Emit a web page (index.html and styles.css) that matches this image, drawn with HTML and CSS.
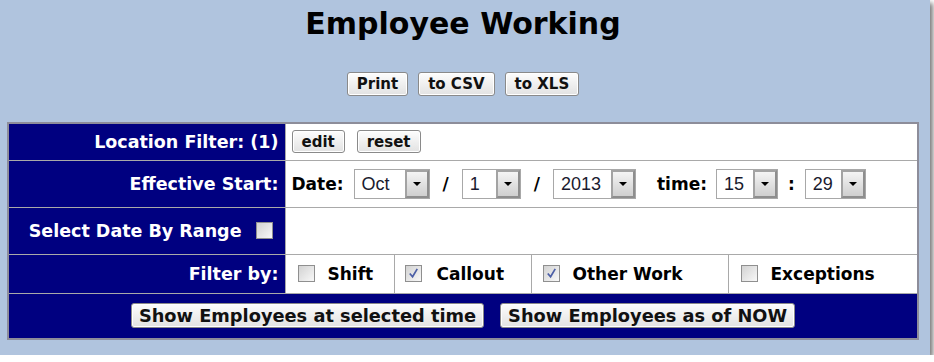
FILE: index.html
```html
<!DOCTYPE html>
<html lang="en">
<head>
    <meta charset="UTF-8">
    <title>Employee Working</title>
    <link rel="stylesheet" href="styles.css">
</head>
<body>
    <div class="page">
        <div class="content">
            <h1 class="title">Employee Working</h1>

            <div class="toolbar">
                <button class="btn">Print</button>
                <button class="btn">to CSV</button>
                <button class="btn">to XLS</button>
            </div>

            <table class="filters">
                <colgroup>
                    <col class="col-label">
                    <col class="col-shift">
                    <col class="col-callout">
                    <col class="col-other">
                    <col>
                </colgroup>
                <tr class="row-location">
                    <th>Location Filter: (1)</th>
                    <td colspan="4">
                        <button class="btn">edit</button>
                        <button class="btn">reset</button>
                    </td>
                </tr>
                <tr class="row-start">
                    <th>Effective Start:</th>
                    <td colspan="4">
                        <div class="when">
                            <span class="field-label">Date:</span>
                            <span class="select sel-month"><span class="value">Oct</span><span class="arrow"></span></span>
                            <span class="sep">/</span>
                            <span class="select sel-day"><span class="value">1</span><span class="arrow"></span></span>
                            <span class="sep">/</span>
                            <span class="select sel-year"><span class="value">2013</span><span class="arrow"></span></span>
                            <span class="field-label time-label">time:</span>
                            <span class="select sel-hour"><span class="value">15</span><span class="arrow"></span></span>
                            <span class="sep colon">:</span>
                            <span class="select sel-min"><span class="value">29</span><span class="arrow"></span></span>
                        </div>
                    </td>
                </tr>
                <tr class="row-range">
                    <th>Select Date By Range<span class="check range-check"></span></th>
                    <td colspan="4"></td>
                </tr>
                <tr class="row-filter">
                    <th>Filter by:</th>
                    <td><span class="check"></span><span class="opt">Shift</span></td>
                    <td><span class="check checked"><svg viewBox="0 0 16 16"><path d="M4 8 L7 11.5 L12 3"/></svg></span><span class="opt">Callout</span></td>
                    <td><span class="check checked"><svg viewBox="0 0 16 16"><path d="M4 8 L7 11.5 L12 3"/></svg></span><span class="opt">Other Work</span></td>
                    <td><span class="check"></span><span class="opt">Exceptions</span></td>
                </tr>
                <tr class="row-actions">
                    <td colspan="5">
                        <div class="actions">
                            <button class="btn btn-big">Show Employees at selected time</button>
                            <button class="btn btn-big">Show Employees as of NOW</button>
                        </div>
                    </td>
                </tr>
            </table>
        </div>
    </div>
</body>
</html>
```

FILE: styles.css
```css
body {
    margin: 0;
    background-color: #fff;
    font-family: "DejaVu Sans", Verdana, sans-serif;
    color: #000;
}

.page {
    width: 930px;
    height: 355px;
    box-sizing: border-box;
    padding: 0 11px 0 7px;
    background-color: #b0c4de; /* light steel blue */
    box-shadow: 3px 3px 5px #7a7a7a;
}

.title {
    margin: 0;
    padding-top: 6px;
    font-size: 30px;
    line-height: 36px;
    text-align: center;
}

.toolbar {
    display: flex;
    justify-content: center;
    gap: 10px;
    margin-top: 30px;
}

.btn {
    height: 24px;
    padding: 0 9px;
    font-family: "DejaVu Sans", Verdana, sans-serif;
    font-size: 15px;
    font-weight: bold;
    color: #111;
    background: linear-gradient(#fdfdfd, #e2e2e2);
    border: 1px solid #8a8a8a;
    border-radius: 3px;
    box-shadow: inset 0 0 0 1px #fff;
}

/* form table */
.filters {
    width: 912px;
    margin-top: 26px;
    border-collapse: collapse;
    border: 2px solid #8d8d9a;
}

.col-label { width: 277px; }
.col-shift { width: 109px; }
.col-callout { width: 137px; }
.col-other { width: 197px; }

.filters th,
.filters td {
    border: 1px solid #a9a9a9;
    padding: 0;
}

.filters th {
    background-color: #000080; /* navy */
    color: #fff;
    font-size: 17.5px;
    font-weight: bold;
    text-align: right;
    padding-right: 6px;
    white-space: nowrap;
}

.filters td {
    background-color: #fff;
    font-size: 17px;
    font-weight: bold;
}

.row-location { height: 37px; }
.row-start { height: 47px; }
.row-range { height: 47px; }
.row-filter { height: 39px; }
.row-actions { height: 46px; }

.row-location td {
    padding-left: 6px;
}

.row-location .btn {
    height: 23px;
    margin-right: 6px;
}

.when {
    display: flex;
    align-items: center;
    padding-left: 6px;
}

.field-label {
    margin-right: 10px;
}

.time-label {
    margin-left: 21px;
    margin-right: 9px;
}

.sep {
    margin: 0 13px;
}

.colon {
    margin: 0 10px;
}

/* drop-down boxes */
.select {
    display: inline-flex;
    height: 30px;
    box-sizing: border-box;
    border: 1px solid #a8a8a8;
    background-color: #fff;
    font-family: "Liberation Sans", Arial, sans-serif;
    font-size: 18px;
    font-weight: normal;
    color: #1a1a2e;
}

.select .value {
    flex: 1;
    padding-left: 7px;
    line-height: 28px;
}

.select .arrow {
    width: 24px;
    box-sizing: border-box;
    border: 2px solid #8e8e8e;
    border-top-color: #a3a3a3;
    border-left-color: #a3a3a3;
    background: linear-gradient(#f4f4f4, #cfcfcf);
    position: relative;
}

.select .arrow::after {
    content: "";
    position: absolute;
    left: 6px;
    top: 10px;
    border-left: 4px solid transparent;
    border-right: 4px solid transparent;
    border-top: 4px solid #000;
}

.sel-month { width: 76px; }
.sel-day { width: 59px; }
.sel-year { width: 83px; }
.sel-hour { width: 62px; }
.sel-min { width: 61px; }

/* check boxes */
.check {
    display: inline-block;
    width: 17px;
    height: 17px;
    box-sizing: border-box;
    vertical-align: -2px;
    border: 1px solid #8f8f8f;
    background: linear-gradient(135deg, #d2d2d2, #f8f8f8);
}

.check svg {
    display: block;
    width: 15px;
    height: 15px;
    fill: none;
    stroke: #4b5ea6;
    stroke-width: 1.8;
}

.range-check {
    margin-left: 14px;
    margin-right: 6px;
}

.row-filter td .check {
    margin-left: 12px;
    margin-right: 13px;
}

.row-filter td:nth-child(3) .check {
    margin-left: 10px;
    margin-right: 15px;
}

.row-filter td:nth-child(4) .check {
    margin-left: 11px;
}

.row-actions td {
    background-color: #000080;
}

.actions {
    display: flex;
    justify-content: center;
    gap: 16px;
}

.btn-big {
    height: 25px;
    padding: 0 7px;
    font-size: 17.8px;
}
```
